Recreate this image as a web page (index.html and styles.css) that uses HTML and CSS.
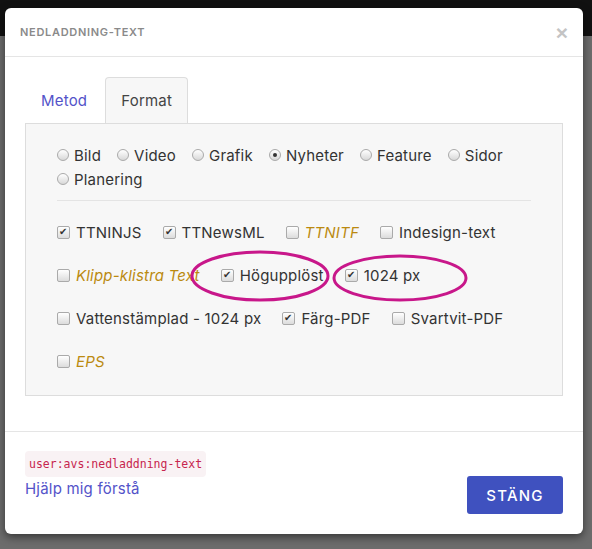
FILE: index.html
```html
<!DOCTYPE html>
<html lang="sv">
<head>
    <meta charset="UTF-8">
    <meta name="viewport" content="width=device-width, initial-scale=1.0">
    <title>Nedladdning-text</title>
    <link rel="stylesheet" href="styles.css">
</head>
<body>
    <div class="backdrop">
        <div class="modal">
            <div class="modal-header">
                <h4 class="modal-title">Nedladdning-text</h4>
                <button class="close">&times;</button>
            </div>
            <div class="modal-body">
                <ul class="tabs">
                    <li class="tab">Metod</li>
                    <li class="tab active">Format</li>
                </ul>
                <div class="tab-panel">
                    <div class="radio-list">
                        <label class="radio"><span class="dot"></span>Bild</label>
                        <label class="radio"><span class="dot"></span>Video</label>
                        <label class="radio"><span class="dot"></span>Grafik</label>
                        <label class="radio"><span class="dot checked"></span>Nyheter</label>
                        <label class="radio"><span class="dot"></span>Feature</label>
                        <label class="radio"><span class="dot"></span>Sidor</label>
                        <label class="radio"><span class="dot"></span>Planering</label>
                    </div>
                    <hr class="divider">
                    <div class="check-row">
                        <label class="check"><span class="box checked"></span>TTNINJS</label>
                        <label class="check"><span class="box checked"></span>TTNewsML</label>
                        <label class="check special"><span class="box"></span>TTNITF</label>
                        <label class="check"><span class="box"></span>Indesign-text</label>
                    </div>
                    <div class="check-row">
                        <label class="check special"><span class="box"></span>Klipp-klistra Text</label>
                        <label class="check"><span class="box checked"></span>Högupplöst</label>
                        <label class="check"><span class="box checked"></span>1024 px</label>
                    </div>
                    <div class="check-row">
                        <label class="check"><span class="box"></span>Vattenstämplad - 1024 px</label>
                        <label class="check"><span class="box checked"></span>Färg-PDF</label>
                        <label class="check"><span class="box"></span>Svartvit-PDF</label>
                    </div>
                    <div class="check-row">
                        <label class="check special"><span class="box"></span>EPS</label>
                    </div>
                </div>
            </div>
            <div class="modal-footer">
                <div class="help">
                    <code class="perm">user:avs:nedladdning-text</code>
                    <a class="help-link" href="#">Hjälp mig förstå</a>
                </div>
                <button class="btn-close">Stäng</button>
            </div>
        </div>
    </div>

    <!-- markeringar ovanpå formaten -->
    <svg class="marks" width="592" height="549" viewBox="0 0 592 549">
        <ellipse cx="260" cy="276" rx="68" ry="24" />
        <ellipse cx="400" cy="278" rx="66" ry="22" />
    </svg>
</body>
</html>
```

FILE: styles.css
```css
body {
    margin: 0;
    padding: 0;
    font-family: Inter, "Open Sans", Arial, sans-serif;
    color: #333;
    background: linear-gradient(#111 0, #111 36px, #6c6c6c 36px);
    height: 549px;
    overflow: hidden;
}
.backdrop {
    padding: 8px 9px 0 5px;
}
.modal {
    background-color: white;
    border-radius: 6px;
    box-shadow: 0 3px 9px rgba(0, 0, 0, 0.5);
    height: 526px;
    display: flex;
    flex-direction: column;
}
.modal-header {
    display: flex;
    justify-content: space-between;
    align-items: center;
    height: 48px;
    padding: 0 15px;
    border-bottom: 1px solid #e5e5e5;
}
.modal-title {
    margin: 0;
    font-size: 11px;
    font-weight: 600;
    color: #8a8a8a;
    text-transform: uppercase;
    letter-spacing: 0.7px;
}
.close {
    background: none;
    border: none;
    padding: 0;
    font-size: 21px;
    font-weight: bold;
    line-height: 1;
    color: #c4c4c4;
    cursor: pointer;
}
.modal-body {
    padding: 20px 20px 35px;
}
.tabs {
    display: flex;
    margin: 0;
    padding: 0;
    list-style: none;
}
.tab {
    height: 45px;
    line-height: 45px;
    padding: 0 15px;
    margin-right: 2px;
    font-size: 15px;
    letter-spacing: 0.2px;
    color: #5353c9;
    border: 1px solid transparent;
    border-bottom: none;
    border-radius: 4px 4px 0 0;
}
.tab.active {
    color: #444;
    background-color: #f7f7f7;
    border-color: #ddd;
    margin-bottom: -1px;
    position: relative;
}
.tab-panel {
    height: 252px;
    padding: 19px 31px 0;
    background-color: #f7f7f7;
    border: 1px solid #ddd;
}
.radio-list {
    display: flex;
    flex-wrap: wrap;
}
.radio, .check {
    display: inline-flex;
    align-items: center;
    height: 24px;
    font-size: 15px;
    letter-spacing: 0.2px;
}
.radio {
    margin-right: 16px;
}
.dot {
    width: 12px;
    height: 12px;
    margin-right: 5px;
    border-radius: 50%;
    border: 1px solid #aaa;
    background: linear-gradient(#fff, #d8d8d8);
    box-sizing: border-box;
    position: relative;
}
.dot.checked::after {
    content: "";
    position: absolute;
    left: 3px;
    top: 3px;
    width: 4px;
    height: 4px;
    border-radius: 50%;
    background-color: #333;
}
.divider {
    margin: 9px 0 0;
    border: none;
    border-top: 1px solid #e4e4e4;
}
.check-row {
    display: flex;
    margin-top: 19px;
}
.check {
    margin-right: 21px;
}
.check.special {
    font-style: italic;
    color: #bb8a10;
}
.box {
    width: 13px;
    height: 13px;
    margin-right: 6px;
    border: 1px solid #aaa;
    border-radius: 2px;
    background: linear-gradient(#fff, #dcdcdc);
    box-sizing: border-box;
    position: relative;
}
.box.checked::after {
    content: "\2714";
    position: absolute;
    left: 1px;
    top: -2px;
    font-size: 10px;
    font-style: normal;
    letter-spacing: 0;
    color: #333;
}
.modal-footer {
    flex: 1;
    display: flex;
    justify-content: space-between;
    align-items: flex-end;
    padding: 19px 20px 20px;
    border-top: 1px solid #e5e5e5;
}
.help {
    align-self: flex-start;
    display: flex;
    flex-direction: column;
    align-items: flex-start;
}
.perm {
    font-family: "DejaVu Sans Mono", "Liberation Mono", monospace;
    font-size: 11.5px;
    color: #c7254e;
    background-color: #f9f2f4;
    border-radius: 4px;
    padding: 6px 4px;
}
.help-link {
    margin-top: 2px;
    font-size: 15px;
    letter-spacing: 0.2px;
    color: #5353c9;
    text-decoration: none;
}
.btn-close {
    width: 96px;
    height: 38px;
    border: none;
    border-radius: 3px;
    background-color: #3f51bf;
    color: white;
    font-family: Inter, "Open Sans", Arial, sans-serif;
    font-size: 15px;
    font-weight: 500;
    letter-spacing: 1.2px;
    text-transform: uppercase;
    cursor: pointer;
}
.marks {
    position: fixed;
    top: 0;
    left: 0;
    pointer-events: none;
}
.marks ellipse {
    fill: none;
    stroke: #c8178a;
    stroke-width: 3;
}
```
